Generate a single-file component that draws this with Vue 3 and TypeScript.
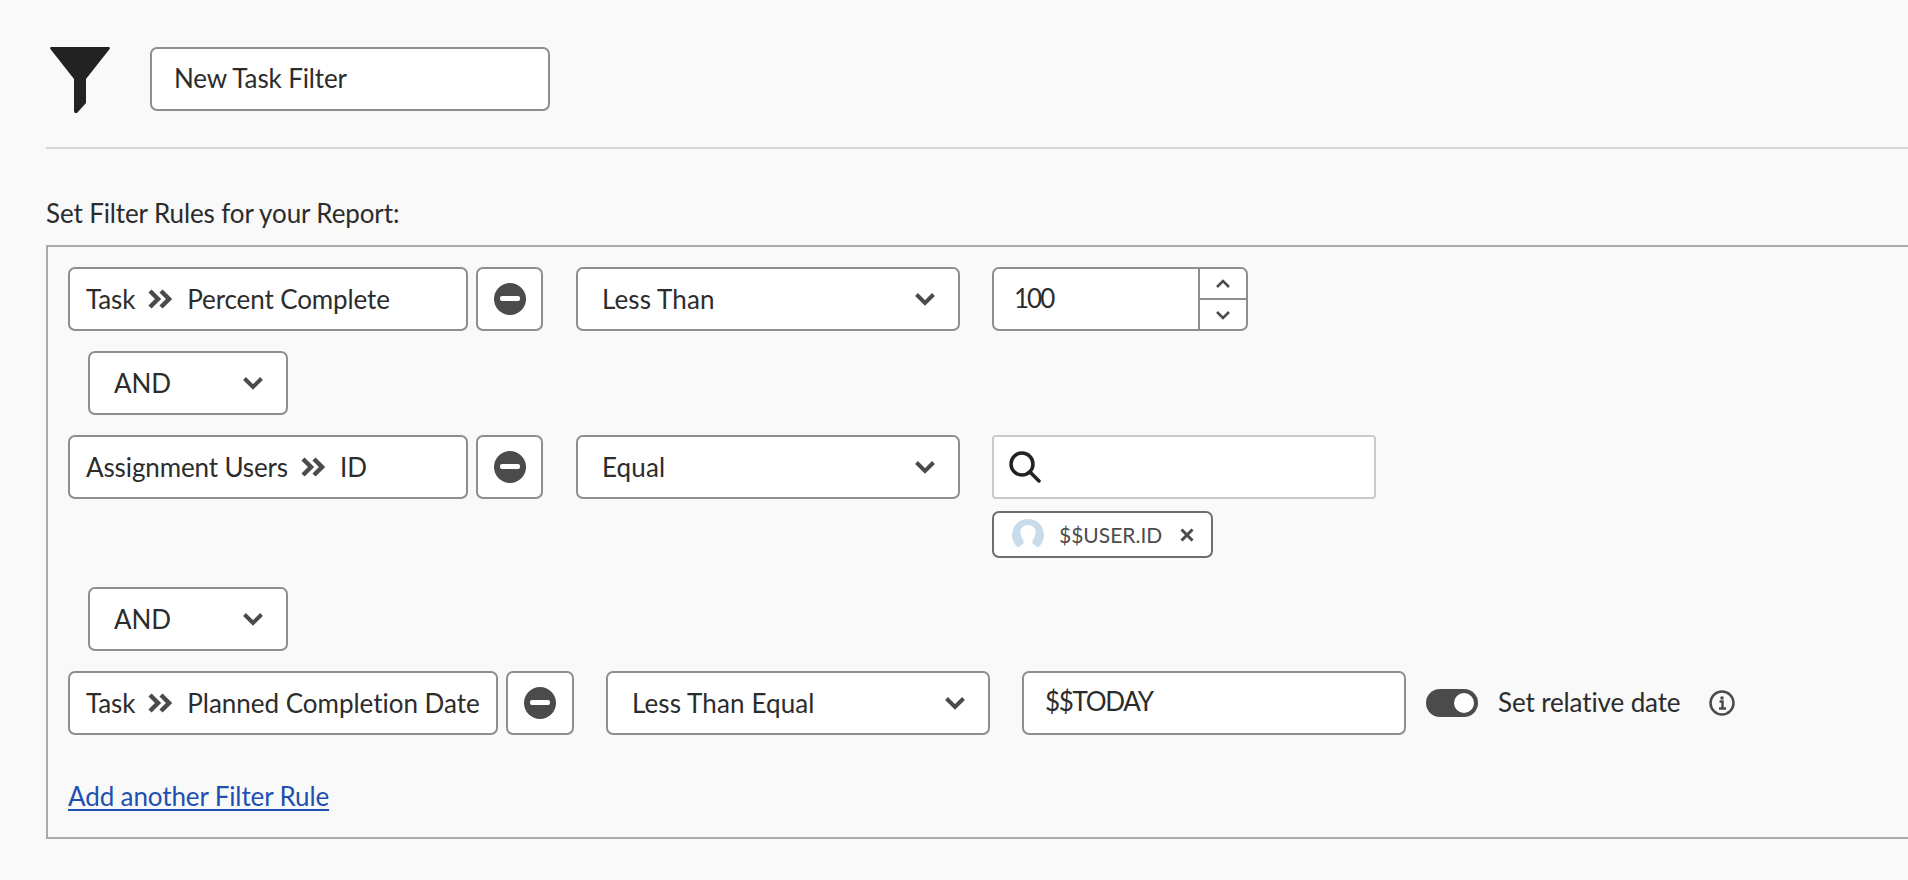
<script setup lang="ts">
interface Crumb {
  left: string
  right: string
  wide?: boolean
}
const crumbs: Record<string, Crumb> = {
  percent: { left: 'Task', right: 'Percent Complete' },
  users: { left: 'Assignment Users', right: 'ID' },
  planned: { left: 'Task', right: 'Planned Completion Date', wide: true },
}
</script>

<template>
  <main class="page">
    <header class="head">
      <svg class="funnel" viewBox="0 0 60 66" aria-hidden="true">
        <path d="M1.500 0H58.500Q60.500 0 59.600 2L36 32V56L27 66H25.500Q24 66 24 64V32L.4 2Q-.5 0 1.500 0Z" />
      </svg>
      <div class="box-input name">New Task Filter</div>
    </header>
    <div class="divider"></div>
    <h2 class="title">Set Filter Rules for your Report:</h2>

    <section class="rules">
      <div class="row">
        <div class="field">
          <span>{{ crumbs.percent.left }}</span>
          <svg class="crumb" viewBox="0 0 24 20"><path d="M2 2 10 10 2 18M13 2 21 10 13 18" /></svg>
          <span>{{ crumbs.percent.right }}</span>
        </div>
        <button class="minus" type="button"><i></i></button>
        <div class="box-input select">
          <span>Less Than</span>
          <svg class="chev" viewBox="0 0 20 14"><path d="M1.500 2.500 10 11 18.500 2.500" /></svg>
        </div>
        <div class="number">
          <span class="num-val">100</span>
          <div class="stepper">
            <div class="step"><svg viewBox="0 0 16 10"><path d="M2 8 8 2 14 8" /></svg></div>
            <div class="step"><svg viewBox="0 0 16 10"><path d="M2 2 8 8 14 2" /></svg></div>
          </div>
        </div>
      </div>

      <div class="box-input andor">
        <span>AND</span>
        <svg class="chev" viewBox="0 0 20 14"><path d="M1.500 2.500 10 11 18.500 2.500" /></svg>
      </div>

      <div class="row">
        <div class="field">
          <span>{{ crumbs.users.left }}</span>
          <svg class="crumb" viewBox="0 0 24 20"><path d="M2 2 10 10 2 18M13 2 21 10 13 18" /></svg>
          <span>{{ crumbs.users.right }}</span>
        </div>
        <button class="minus" type="button"><i></i></button>
        <div class="box-input select">
          <span>Equal</span>
          <svg class="chev" viewBox="0 0 20 14"><path d="M1.500 2.500 10 11 18.500 2.500" /></svg>
        </div>
        <div class="picker">
          <div class="search">
            <svg viewBox="0 0 32 32"><circle cx="13" cy="13" r="11" /><path d="M21 21 30 30" /></svg>
          </div>
          <div class="chip">
            <svg class="avatar" viewBox="0 0 32 32">
              <path d="M6 28.500A16 16 0 1 1 26 28.500Q22 25.500 20.500 24.500V21Q24 17.500 23.500 12.500 22.500 6 16 6T8.500 12.500Q8 17.500 11.500 21V24.500Q10 25.500 6 28.500Z" />
            </svg>
            <span class="chip-text">$$USER.ID</span>
            <svg class="chip-x" viewBox="0 0 14 14"><path d="M1.500 1.500 12.500 12.500M12.500 1.500 1.500 12.500" /></svg>
          </div>
        </div>
      </div>

      <div class="box-input andor second">
        <span>AND</span>
        <svg class="chev" viewBox="0 0 20 14"><path d="M1.500 2.500 10 11 18.500 2.500" /></svg>
      </div>

      <div class="row">
        <div class="field wide">
          <span>{{ crumbs.planned.left }}</span>
          <svg class="crumb" viewBox="0 0 24 20"><path d="M2 2 10 10 2 18M13 2 21 10 13 18" /></svg>
          <span class="tight">{{ crumbs.planned.right }}</span>
        </div>
        <button class="minus narrow" type="button"><i></i></button>
        <div class="box-input select">
          <span>Less Than Equal</span>
          <svg class="chev" viewBox="0 0 20 14"><path d="M1.500 2.500 10 11 18.500 2.500" /></svg>
        </div>
        <div class="box-input date"><span class="raised">$$TODAY</span></div>
        <div class="toggle"><i></i></div>
        <span class="toggle-label">Set relative date</span>
        <svg class="info" viewBox="0 0 26 26">
          <circle cx="13" cy="13" r="11.500" />
          <circle class="dot" cx="13" cy="8" r="1.800" />
          <path d="M10.500 11.500H13.500V18.500M10 18.500H17" />
        </svg>
      </div>

      <a class="add" href="#">Add another Filter Rule</a>
    </section>
  </main>
</template>

<style>
html,
body {
  margin: 0;
  background: #f9f9f9;
  overflow: hidden;
}
</style>

<style scoped>
.page {
  width: 1908px;
  height: 880px;
  box-sizing: border-box;
  padding: 47px 0 0 46px;
  overflow: hidden;
  background: #f9f9f9;
  color: #2c2c2c;
  font-family: Lato, "Open Sans", sans-serif;
  font-size: 26px;
  letter-spacing: -0.12px;
}
.head {
  display: flex;
  align-items: flex-start;
}
.funnel {
  width: 60px;
  height: 66px;
  margin: 0 40px 0 4px;
  fill: #222;
}
.box-input,
.field,
.minus,
.number {
  box-sizing: border-box;
  height: 64px;
  background: #fff;
  border: 2px solid #8e8e8e;
  border-radius: 7px;
}
.box-input {
  display: flex;
  align-items: center;
}
.name {
  width: 400px;
  padding-left: 22px;
  padding-bottom: 2px;
}
.divider {
  height: 2px;
  margin-top: 34px;
  background: #d5d5d5;
}
.title {
  margin: 48px 0 0;
  height: 33px;
  font-size: 26px;
  font-weight: 400;
  line-height: 33px;
}
.rules {
  box-sizing: border-box;
  width: 1900px;
  height: 594px;
  margin-top: 15px;
  padding: 20px 0 0 20px;
  border: 2px solid #ababab;
}
.row {
  display: flex;
  align-items: flex-start;
}
.field {
  display: flex;
  align-items: center;
  width: 400px;
  padding-left: 16px;
  white-space: nowrap;
}
.field.wide {
  width: 430px;
}
.tight {
  letter-spacing: -0.02px;
}
.crumb {
  flex: none;
  width: 24px;
  height: 20px;
  margin: 0 15px 0 13px;
  fill: none;
  stroke: #4b4b4b;
  stroke-width: 4.500;
}
.minus {
  display: flex;
  align-items: center;
  justify-content: center;
  width: 67px;
  margin: 0 33px 0 8px;
  padding: 0;
}
.minus.narrow {
  width: 68px;
  margin: 0 32px 0 8px;
}
.minus i {
  position: relative;
  display: block;
  width: 32px;
  height: 32px;
  border-radius: 50%;
  background: #4b4b4b;
}
.minus i::after {
  content: "";
  position: absolute;
  left: 6px;
  top: 13px;
  width: 20px;
  height: 5px;
  border-radius: 2px;
  background: #fff;
}
.select {
  justify-content: space-between;
  width: 384px;
  padding: 0 23px 0 24px;
  letter-spacing: 0.12px;
}
.chev {
  flex: none;
  width: 20px;
  height: 14px;
  fill: none;
  stroke: #4b4b4b;
  stroke-width: 4;
}
.number {
  display: flex;
  width: 256px;
  margin-left: 32px;
  overflow: hidden;
}
.num-val {
  flex: 1;
  padding-left: 20px;
  letter-spacing: -2px;
  line-height: 58px;
}
.stepper {
  display: flex;
  flex-direction: column;
  width: 46px;
  border-left: 2px solid #8e8e8e;
}
.step {
  display: flex;
  flex: 1;
  align-items: center;
  justify-content: center;
}
.step + .step {
  border-top: 2px solid #8e8e8e;
}
.step svg {
  width: 16px;
  height: 10px;
  fill: none;
  stroke: #4b4b4b;
  stroke-width: 2.500;
}
.andor {
  justify-content: space-between;
  width: 200px;
  margin: 20px 0 20px 20px;
  padding: 0 23px 0 24px;
}
.andor.second {
  margin-top: 29px;
}
.picker {
  display: flex;
  flex-direction: column;
  align-items: flex-start;
  margin-left: 32px;
}
.search {
  display: flex;
  align-items: center;
  box-sizing: border-box;
  width: 384px;
  height: 64px;
  padding-left: 15px;
  background: #fff;
  border: 2px solid #cacaca;
  border-radius: 4px;
}
.search svg {
  width: 32px;
  height: 32px;
  fill: none;
  stroke: #222;
  stroke-width: 3.500;
  stroke-linecap: round;
}
.chip {
  display: flex;
  align-items: center;
  box-sizing: border-box;
  width: 221px;
  height: 47px;
  margin-top: 12px;
  padding-left: 18px;
  background: #fff;
  border: 2px solid #6e6e6e;
  border-radius: 7px;
}
.avatar {
  flex: none;
  width: 32px;
  height: 32px;
  fill: #c9dcec;
}
.chip-text {
  margin-left: 15px;
  color: #4b4b4b;
  font-size: 21px;
  letter-spacing: 0;
}
.chip-x {
  flex: none;
  width: 14px;
  height: 14px;
  margin-left: 18px;
  fill: none;
  stroke: #4b4b4b;
  stroke-width: 3;
}
.date {
  width: 384px;
  margin-left: 32px;
  padding-left: 21px;
}
.raised {
  margin-top: -4px;
  letter-spacing: -1.300px;
}
.toggle {
  position: relative;
  flex: none;
  width: 52px;
  height: 28px;
  margin: 18px 0 0 20px;
  border-radius: 14px;
  background: #4b4b4b;
}
.toggle i {
  position: absolute;
  top: 4px;
  right: 4px;
  width: 20px;
  height: 20px;
  border-radius: 50%;
  background: #fff;
}
.toggle-label {
  margin: 15px 0 0 20px;
  line-height: 33px;
}
.info {
  flex: none;
  width: 26px;
  height: 26px;
  margin: 19px 0 0 29px;
  fill: none;
  stroke: #4b4b4b;
  stroke-width: 2.500;
}
.info .dot {
  fill: #4b4b4b;
  stroke: none;
}
.add {
  display: inline-block;
  margin-top: 45px;
  color: #1d50b0;
  line-height: 33px;
  text-decoration: underline;
  text-underline-offset: 3px;
}
</style>
